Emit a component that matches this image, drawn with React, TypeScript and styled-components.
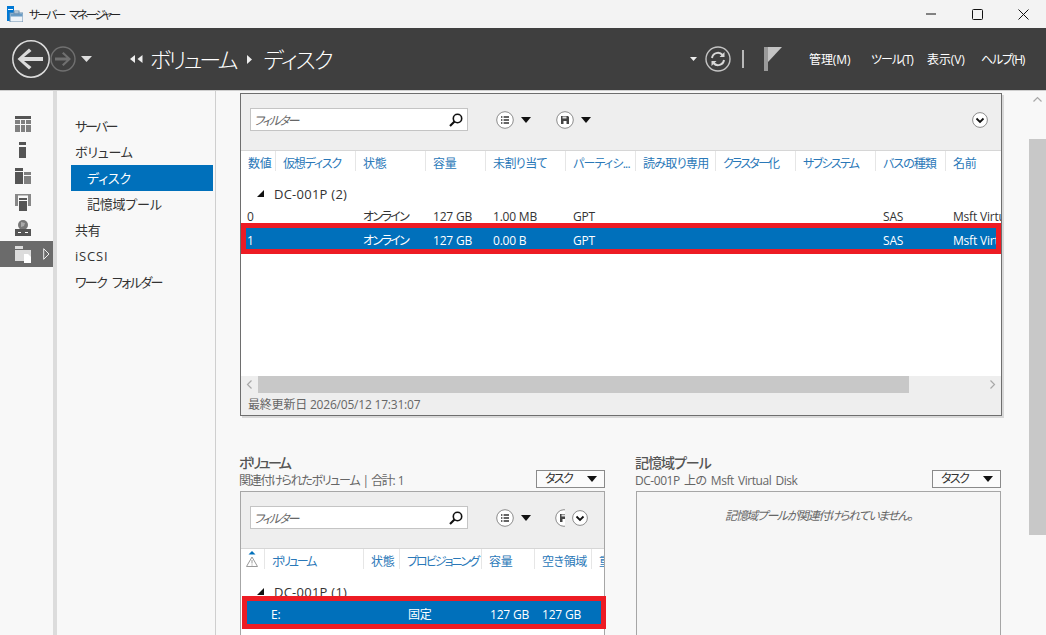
import React from 'react';
import styled, { createGlobalStyle } from 'styled-components';

const GlobalStyle = createGlobalStyle`
  html, body {
    margin: 0;
    padding: 0;
    height: 100%;
    overflow: hidden;
  }
  body {
    font-family: "Open Sans", "Noto Sans CJK JP", sans-serif;
    font-size: 12px;
    font-feature-settings: "palt";
    color: #333;
  }
`;

const AppContainer = styled.div`
  width: 1046px;
  height: 635px;
  display: flex;
  flex-direction: column;
  overflow: hidden;
  background: #f8f8f8;
`;

const Glyph = styled.svg`
  flex: none;
  display: block;
`;

const Gap = styled.span<{ $w: number }>`
  width: ${p => p.$w}px;
  flex: none;
`;

/* window chrome */
const TitleBar = styled.div`
  height: 28px;
  flex: none;
  display: flex;
  align-items: center;
  background: #f3f3f3;
  padding-left: 7px;
`;

const TitleText = styled.span`
  margin-left: 6px;
  font-size: 11.5px;
  letter-spacing: -2.4px;
  word-spacing: 5px;
  color: #222;
  flex: 1;
`;

const WinButton = styled.div`
  width: 46px;
  height: 28px;
  display: flex;
  align-items: center;
  justify-content: center;
`;

const Header = styled.header`
  height: 62px;
  flex: none;
  display: flex;
  align-items: center;
  background: #3f3f3f;
  padding-left: 11px;
`;

const BackGroup = styled.div`
  display: flex;
  align-items: center;
  width: 119px;
`;

const ForwardSlot = styled.div`
  margin-left: -1px;
`;

const Crumb = styled.span<{ $ml: number; $ls: number }>`
  font-size: 22px;
  font-weight: 300;
  letter-spacing: ${p => p.$ls}px;
  color: #fff;
  margin: 0 12px 0 ${p => p.$ml}px;
  line-height: 28px;
`;

const Spacer = styled.div`
  flex: 1;
`;

const HeaderTools = styled.div`
  display: flex;
  align-items: center;
  margin-right: 21px;
`;

const MenuItem = styled.span<{ $w: number; $ls: number }>`
  width: ${p => p.$w}px;
  font-size: 12px;
  letter-spacing: ${p => p.$ls}px;
  color: #fff;
  white-space: nowrap;
`;

const Body = styled.div`
  flex: 1;
  display: flex;
  min-height: 0;
  border-top: 1px solid #cfcfcf;
`;

/* left icon rail */
const Rail = styled.nav`
  width: 57px;
  box-sizing: border-box;
  flex: none;
  padding-top: 20px;
  border-right: 4px solid #dcdcdc;
  background: #f8f8f8;
`;

const RailItem = styled.div<{ $active?: boolean }>`
  height: 26px;
  position: relative;
  display: flex;
  align-items: center;
  padding-left: 15px;
  background: ${p => (p.$active ? '#6b6b6b' : 'transparent')};
`;

const RailArrow = styled.svg`
  position: absolute;
  right: 3px;
  top: 7px;
`;

/* tree nav */
const Nav = styled.nav`
  width: 159px;
  box-sizing: border-box;
  flex: none;
  padding: 22px 2px 0 14px;
  border-right: 1px solid #cfcfcf;
`;

const NavItem = styled.div<{ $sub?: boolean; $active?: boolean; $ls?: number }>`
  height: 26px;
  line-height: 27px;
  font-size: 13px;
  letter-spacing: ${p => p.$ls ?? -0.2}px;
  word-spacing: 4px;
  padding-left: ${p => (p.$sub ? 16 : 4)}px;
  background: ${p => (p.$active ? '#0070bb' : 'transparent')};
  color: ${p => (p.$active ? '#fff' : '#333')};
`;

/* content */
const Content = styled.main`
  flex: 1;
  min-width: 0;
  padding: 2px 0 0 24px;
  overflow: hidden;
`;

const Panel = styled.section`
  width: 762px;
  height: 323px;
  box-sizing: border-box;
  display: flex;
  flex-direction: column;
  border: 1px solid #6e6e6e;
  box-shadow: 2px 2px 0 #d8d8d8;
  background: #fff;
`;

const Toolbar = styled.div`
  height: 57px;
  flex: none;
  box-sizing: border-box;
  display: flex;
  align-items: flex-start;
  padding: 14px 13px 0 9px;
  background: #eeeeee;
  border-bottom: 1px solid #d6d6d6;
`;

const FilterBox = styled.div`
  width: 218px;
  height: 23px;
  flex: none;
  box-sizing: border-box;
  display: flex;
  align-items: center;
  justify-content: space-between;
  padding: 0 3px 0 3px;
  background: #fff;
  border: 1px solid #c4c4c4;
  font-size: 12px;
  font-style: italic;
  letter-spacing: -1.8px;
  color: #666;
`;

const ToolGroup = styled.div<{ $ml: number; $w?: number }>`
  display: flex;
  align-items: center;
  gap: 7px;
  height: 23px;
  margin-left: ${p => p.$ml}px;
  ${p => (p.$w ? `width: ${p.$w}px; overflow: hidden;` : '')}
`;

const MAIN_COLS = '35px 80px 70px 60px 80px 70px 80px 80px 80px 70px 55px';
const MAIN_SEL_COLS = '30px 80px 70px 60px 80px 70px 80px 80px 80px 70px 50px';
const VOL_COLS = '24px 99px 36px 82px 53px 57px 1fr';
const VOL_SEL_COLS = '17px 100px 36px 82px 53px 57px 1fr';

const HeadRow = styled.div<{ $cols: string }>`
  display: grid;
  grid-template-columns: ${p => p.$cols};
  height: 22px;
  flex: none;
  overflow: hidden;
`;

const HeadCell = styled.div<{ $ls?: number }>`
  box-sizing: border-box;
  padding: 0 0 0 7px;
  line-height: 26px;
  font-size: 12px;
  letter-spacing: ${p => p.$ls ?? -0.2}px;
  color: #2a78b8;
  white-space: nowrap;
  overflow: hidden;
  border-right: 1px solid #e6e6e6;
  margin-bottom: 2px;
  &:last-child {
    border-right: 0;
  }
`;

const SortCell = styled(HeadCell)`
  padding: 2px 0 0 4px;
`;

const GroupRow = styled.div<{ $h: number; $mb?: number }>`
  height: ${p => p.$h}px;
  margin-bottom: ${p => p.$mb ?? 0}px;
  flex: none;
  display: flex;
  align-items: flex-start;
  padding: 12px 0 0 16px;
  box-sizing: border-box;
  gap: 10px;
  font-size: 13px;
  letter-spacing: 0.25px;
  line-height: 18px;
  color: #333;
`;

const Triangle = styled.span`
  margin-top: 5px;
`;

const Row = styled.div<{ $cols: string; $selected?: boolean; $h?: number }>`
  display: grid;
  grid-template-columns: ${p => p.$cols};
  box-sizing: border-box;
  height: ${p => p.$h ?? (p.$selected ? 21 : 18)}px;
  padding-top: ${p => ((p.$h ?? (p.$selected ? 21 : 19)) + 5) / 2 - 9}px;
  line-height: 18px;
  flex: none;
  font-size: 12px;
  color: ${p => (p.$selected ? '#fff' : '#333')};
  background: ${p => (p.$selected ? '#0070bb' : 'transparent')};
  white-space: nowrap;
`;

const RowFrame = styled.div<{ $mr?: number; $ml?: number }>`
  flex: none;
  position: relative;
  margin-right: ${p => p.$mr ?? 0}px;
  margin-left: ${p => p.$ml ?? 0}px;
  border: 5px solid #ed1c24;
`;

const Cell = styled.div<{ $pl?: number }>`
  padding-left: ${p => p.$pl ?? 7}px;
  overflow-x: clip;
  letter-spacing: -0.2px;
`;

const Kana = styled.span`
  letter-spacing: -1.6px;
`;

const TableFill = styled.div`
  flex: 1;
`;

const HScroll = styled.div`
  height: 17px;
  flex: none;
  display: flex;
  align-items: stretch;
  background: #eeeeee;
`;

const ScrollEnd = styled.div`
  width: 17px;
  flex: none;
  display: flex;
  align-items: center;
  justify-content: center;
`;

const ScrollThumb = styled.div`
  width: 651px;
  flex: none;
  background: #c8c8c8;
`;

const ScrollRest = styled.div`
  flex: 1;
`;

const Footer = styled.div`
  height: 22px;
  flex: none;
  padding-left: 7px;
  line-height: 23px;
  font-size: 12px;
  letter-spacing: -0.2px;
  color: #666;
  background: #eeeeee;
`;

const Columns = styled.div`
  display: flex;
  margin-top: 38px;
  margin-left: -1px;
`;

const Section = styled.section<{ $ml?: number }>`
  width: 366px;
  margin-left: ${p => p.$ml ?? 0}px;
  flex: none;
`;

const SectionTitle = styled.h2<{ $ls: number }>`
  margin: 0;
  height: 16px;
  line-height: 17px;
  font-size: 14px;
  font-weight: 500;
  letter-spacing: ${p => p.$ls}px;
  color: #555;
`;

const SectionSub = styled.div<{ $ls: number }>`
  display: flex;
  justify-content: space-between;
  align-items: flex-start;
  height: 18px;
  margin-bottom: 3px;
  font-size: 12px;
  line-height: 22px;
  letter-spacing: ${p => p.$ls}px;
  word-spacing: 1.5px;
  color: #666;
`;

const TaskButton = styled.div`
  width: 69px;
  height: 18px;
  box-sizing: border-box;
  display: flex;
  align-items: center;
  justify-content: space-between;
  padding: 0 7px 0 8px;
  background: #fbfbfb;
  border: 1px solid #8a8a8a;
  font-size: 12px;
  letter-spacing: -1.6px;
  color: #333;
`;

const SubPanel = styled.div`
  margin-left: 1px;
  height: 160px;
  box-sizing: border-box;
  display: flex;
  flex-direction: column;
  border: 1px solid #a6a6a6;
  background: #fff;
`;

const EmptyPanel = styled.div`
  margin-left: 1px;
  height: 160px;
  box-sizing: border-box;
  border: 1px solid #a6a6a6;
  background: #f6f6f6;
  padding-top: 14px;
  text-align: center;
  font-size: 12px;
  font-style: italic;
  letter-spacing: -1.4px;
  color: #666;
`;

const VScroll = styled.div`
  width: 17px;
  flex: none;
  display: flex;
  flex-direction: column;
  background: #f8f8f8;
`;

const VScrollTop = styled.div`
  height: 48px;
  display: flex;
  justify-content: center;
  padding-top: 5px;
  box-sizing: border-box;
`;

const VScrollThumb = styled.div`
  height: 396px;
  background: #c8c8c8;
`;

/* drawings */
const AppIcon = () => (
  <Glyph width="16" height="16" viewBox="0 0 16 16">
    <rect x="0" y="0" width="7" height="15" fill="#0078d4" />
    <rect x="1" y="3" width="5" height="1" fill="#fff" />
    <rect x="3" y="7" width="13" height="9" fill="#eef3f8" stroke="#6a8fb0" />
    <rect x="3.5" y="7.5" width="12" height="3" fill="#6a9cc4" />
    <rect x="7" y="5" width="5" height="3" fill="none" stroke="#6a8fb0" />
  </Glyph>
);

const BackIcon = () => (
  <Glyph width="40" height="40" viewBox="0 0 40 40">
    <circle cx="20" cy="20" r="18.2" fill="none" stroke="#dcdcdc" strokeWidth="1.5" />
    <path d="M6.5 20 L18 9.5 L20.5 12 L13 18 H32 V22 H13 L20.5 28 L18 30.5 Z" fill="#dcdcdc" />
  </Glyph>
);

const ForwardIcon = () => (
  <Glyph width="26" height="26" viewBox="0 0 26 26">
    <circle cx="13" cy="13" r="12" fill="none" stroke="#707070" strokeWidth="1.4" />
    <path d="M21 13 L13.5 6 L12 7.5 L16.5 11.5 H5 V14.5 H16.5 L12 18.5 L13.5 20 Z" fill="#707070" />
  </Glyph>
);

const Tri = ({ w = 9, h = 5, fill = '#ddd', dir = 'down' }: { w?: number; h?: number; fill?: string; dir?: string }) => (
  <Glyph width={w} height={h} viewBox={`0 0 ${w} ${h}`}>
    {dir === 'down' && <path d={`M0 0 H${w} L${w / 2} ${h} Z`} fill={fill} />}
    {dir === 'right' && <path d={`M0 0 L${w} ${h / 2} L0 ${h} Z`} fill={fill} />}
  </Glyph>
);

const ExpandedTri = () => (
  <Glyph width="7" height="7" viewBox="0 0 7 7">
    <path d="M7 0 V7 H0 Z" fill="#111" />
  </Glyph>
);

const BackChevrons = () => (
  <Glyph width="13" height="8" viewBox="0 0 13 8">
    <path d="M5 0 L0 4 L5 8 Z M12.5 0 L7.5 4 L12.5 8 Z" fill="#eee" />
  </Glyph>
);

const RefreshIcon = () => (
  <Glyph width="26" height="26" viewBox="0 0 26 26">
    <circle cx="13" cy="13" r="12" fill="none" stroke="#c4c4c4" strokeWidth="1.4" />
    <path d="M7 12 a6 6 0 0 1 10.5 -3 M19 14 a6 6 0 0 1 -10.5 3" fill="none" stroke="#d8d8d8" strokeWidth="2" />
    <path d="M19.5 6 V11 H14.5 Z M6.5 20 V15 H11.5 Z" fill="#d8d8d8" />
  </Glyph>
);

const FlagIcon = () => (
  <Glyph width="18" height="24" viewBox="0 0 18 24">
    <rect x="0" y="0" width="4" height="24" fill="#9a9a9a" />
    <path d="M4 0 H18 L4 15 Z" fill="#c4c4c4" />
  </Glyph>
);

const GridIcon = () => (
  <Glyph width="16" height="16" viewBox="0 0 16 16">
    <rect x="0" y="0" width="16" height="3" fill="#555" />
    <path d="M0 4 H5 V8 H0 Z M6 4 H10 V8 H6 Z M11 4 H16 V8 H11 Z M0 9 H5 V16 H0 Z M6 9 H10 V16 H6 Z M11 9 H16 V16 H11 Z" fill="#808080" />
  </Glyph>
);

const ServerIcon = () => (
  <Glyph width="16" height="16" viewBox="0 0 16 16">
    <rect x="4" y="0" width="7" height="3" fill="#555" />
    <rect x="4" y="5" width="7" height="11" fill="#555" />
  </Glyph>
);

const RolesIcon = () => (
  <Glyph width="16" height="16" viewBox="0 0 16 16">
    <rect x="0" y="0" width="8" height="3" fill="#555" />
    <rect x="0" y="4" width="8" height="12" fill="#555" />
    <rect x="9" y="4" width="7" height="3" fill="#808080" />
    <rect x="9" y="8" width="7" height="8" fill="#808080" />
  </Glyph>
);

const GroupIcon = () => (
  <Glyph width="16" height="17" viewBox="0 0 16 17">
    <rect x="0" y="0" width="16" height="12" fill="#888" />
    <rect x="3" y="1.5" width="10" height="10.5" fill="#f8f8f8" />
    <rect x="4" y="4" width="8" height="2" fill="#555" />
    <rect x="4" y="7" width="8" height="10" fill="#555" />
  </Glyph>
);

const GlobeIcon = () => (
  <Glyph width="16" height="16" viewBox="0 0 16 16">
    <circle cx="8" cy="5" r="5" fill="#777" />
    <path d="M6 2 L10 3 L9 6 L6 7 Z" fill="#aaa" />
    <rect x="0" y="9" width="16" height="7" fill="#555" />
    <rect x="3" y="12" width="3" height="1" fill="#fff" />
    <rect x="10" y="12" width="3" height="1" fill="#fff" />
  </Glyph>
);

const FilesIcon = () => (
  <Glyph width="16" height="17" viewBox="0 0 16 17">
    <path d="M0 0 H8 V3 H0 Z M0 4 H16 V15 H0 Z" fill="#dcdcdc" />
    <path d="M9 8 H13 L16 11 V17 H9 Z" fill="#fff" />
  </Glyph>
);

const SearchIcon = () => (
  <Glyph width="16" height="16" viewBox="0 0 16 16">
    <circle cx="9.5" cy="6.5" r="4.2" fill="none" stroke="#111" strokeWidth="1.6" />
    <path d="M6.5 9.5 L2 14" stroke="#111" strokeWidth="2.2" />
  </Glyph>
);

const ListCircle = () => (
  <Glyph width="18" height="18" viewBox="0 0 18 18">
    <circle cx="9" cy="9" r="8.3" fill="#fff" stroke="#8c8c8c" />
    <path d="M5 6 H6.4 M5 9 H6.4 M5 12 H6.4 M7.6 6 H13 M7.6 9 H13 M7.6 12 H13" stroke="#333" strokeWidth="1.3" />
  </Glyph>
);

const SaveCircle = () => (
  <Glyph width="18" height="18" viewBox="0 0 18 18">
    <circle cx="9" cy="9" r="8.3" fill="#fff" stroke="#8c8c8c" />
    <path d="M5 5 H12 L13 6 V13 H5 Z" fill="#444" />
    <rect x="6.5" y="5.5" width="4" height="2" fill="#ddd" />
    <rect x="7.5" y="10" width="3" height="3" fill="#fff" />
  </Glyph>
);

const ChevronCircle = () => (
  <Glyph width="16" height="16" viewBox="0 0 16 16">
    <circle cx="8" cy="8" r="7.4" fill="#fff" stroke="#8c8c8c" />
    <path d="M4.5 6.5 L8 10 L11.5 6.5" fill="none" stroke="#111" strokeWidth="1.8" />
  </Glyph>
);

const ScrollChevron = ({ dir }: { dir: string }) => (
  <Glyph width="7" height="9" viewBox="0 0 7 9">
    <path d={dir === 'left' ? 'M5.5 0.5 L1.5 4.5 L5.5 8.5' : 'M1.5 0.5 L5.5 4.5 L1.5 8.5'} fill="none" stroke="#a8a8a8" strokeWidth="1.2" />
  </Glyph>
);

const SortIcon = () => (
  <Glyph width="14" height="18" viewBox="0 0 14 18">
    <path d="M3.5 3.5 L7 0 L10.5 3.5 Z" fill="#0070bb" />
    <path d="M7 6 L12.5 15.5 H1.5 Z" fill="none" stroke="#999" />
    <path d="M7 9 V12.5 M7 13.5 V14.5" stroke="#999" />
  </Glyph>
);

const mainHead: [string, number][] = [
  ['数値', -0.2],
  ['仮想ディスク', -1.2],
  ['状態', -0.2],
  ['容量', -0.2],
  ['未割り当て', -0.6],
  ['パーティシ...', -0.8],
  ['読み取り専用', -0.7],
  ['クラスター化', -1.8],
  ['サブシステム', -1.7],
  ['バスの種類', -1],
  ['名前', -0.2],
];

const volHead: [string, number][] = [
  ['ボリューム', -2.2],
  ['状態', -0.2],
  ['プロビジョニング', -2],
  ['容量', -0.2],
  ['空き領域', -0.4],
  ['重', 0],
];

const railIcons = [GridIcon, ServerIcon, RolesIcon, GroupIcon, GlobeIcon];

const DiskRow: React.FC<{ num: string; free: string; selected?: boolean }> = ({ num, free, selected }) => (
  <Row $cols={selected ? MAIN_SEL_COLS : MAIN_COLS} $selected={selected}>
    <Cell $pl={selected ? 1 : 6}>{num}</Cell>
    <Cell />
    <Cell><Kana>オンライン</Kana></Cell>
    <Cell>127 GB</Cell>
    <Cell>{free}</Cell>
    <Cell>GPT</Cell>
    <Cell />
    <Cell />
    <Cell />
    <Cell>SAS</Cell>
    <Cell>Msft Virtual Disk</Cell>
  </Row>
);

const App: React.FC = () => (
  <AppContainer>
    <GlobalStyle />
    <TitleBar>
      <AppIcon />
      <TitleText>サーバー マネージャー</TitleText>
      <WinButton>
        <Glyph width="10" height="10" viewBox="0 0 10 10"><path d="M0 5 H10" stroke="#111" /></Glyph>
      </WinButton>
      <WinButton>
        <Glyph width="11" height="11" viewBox="0 0 11 11"><rect x="0.5" y="0.5" width="10" height="10" rx="1" fill="none" stroke="#111" /></Glyph>
      </WinButton>
      <WinButton>
        <Glyph width="11" height="11" viewBox="0 0 11 11"><path d="M0.5 0.5 L10.5 10.5 M10.5 0.5 L0.5 10.5" stroke="#111" /></Glyph>
      </WinButton>
    </TitleBar>

    <Header>
      <BackGroup>
        <BackIcon />
        <ForwardSlot><ForwardIcon /></ForwardSlot>
        <Gap $w={5} />
        <Tri w={11} h={6} />
      </BackGroup>
      <BackChevrons />
      <Crumb $ml={7} $ls={-2.8}>ボリューム</Crumb>
      <Tri w={5} h={9} fill="#eee" dir="right" />
      <Crumb $ml={11} $ls={-1.8}>ディスク</Crumb>
      <Spacer />
      <HeaderTools>
        <Tri w={7} h={4} fill="#eee" />
        <Gap $w={8} />
        <RefreshIcon />
        <Gap $w={11} />
        <Glyph width="2" height="18" viewBox="0 0 2 18"><rect width="2" height="18" fill="#b8b8b8" /></Glyph>
        <Gap $w={20} />
        <FlagIcon />
        <Gap $w={27} />
        <MenuItem $w={62} $ls={-0.1}>管理(M)</MenuItem>
        <MenuItem $w={56} $ls={-1}>ツール(T)</MenuItem>
        <MenuItem $w={54} $ls={-0.1}>表示(V)</MenuItem>
        <MenuItem $w={44} $ls={-1.2}>ヘルプ(H)</MenuItem>
      </HeaderTools>
    </Header>

    <Body>
      <Rail>
        {railIcons.map((Icon, i) => (
          <RailItem key={i}><Icon /></RailItem>
        ))}
        <RailItem $active>
          <FilesIcon />
          <RailArrow width="7" height="12" viewBox="0 0 7 12">
            <path d="M0.7 0.7 L6 6 L0.7 11.3 Z" fill="none" stroke="#eee" />
          </RailArrow>
        </RailItem>
      </Rail>

      <Nav>
        <NavItem $ls={-2.2}>サーバー</NavItem>
        <NavItem>ボリューム</NavItem>
        <NavItem $sub $active>ディスク</NavItem>
        <NavItem $sub>記憶域プール</NavItem>
        <NavItem>共有</NavItem>
        <NavItem $ls={0.8}>iSCSI</NavItem>
        <NavItem $ls={-1.6}>ワーク フォルダー</NavItem>
      </Nav>

      <Content>
        <Panel>
          <Toolbar>
            <FilterBox>フィルター<SearchIcon /></FilterBox>
            <ToolGroup $ml={28}><ListCircle /><Tri w={10} h={6} fill="#111" /></ToolGroup>
            <ToolGroup $ml={25}><SaveCircle /><Tri w={10} h={6} fill="#111" /></ToolGroup>
            <Spacer />
            <ToolGroup $ml={0}><ChevronCircle /></ToolGroup>
          </Toolbar>
          <HeadRow $cols={MAIN_COLS}>
            {mainHead.map(([h, ls]) => <HeadCell key={h} $ls={ls}>{h}</HeadCell>)}
          </HeadRow>
          <GroupRow $h={30} $mb={2}><Triangle><ExpandedTri /></Triangle>DC-001P (2)</GroupRow>
          <DiskRow num="0" free="1.00 MB" />
          <RowFrame>
            <DiskRow num="1" free="0.00 B" selected />
          </RowFrame>
          <TableFill />
          <HScroll>
            <ScrollEnd><ScrollChevron dir="left" /></ScrollEnd>
            <ScrollThumb />
            <ScrollRest />
            <ScrollEnd><ScrollChevron dir="right" /></ScrollEnd>
          </HScroll>
          <Footer>最終更新日 2026/05/12 17:31:07</Footer>
        </Panel>

        <Columns>
          <Section>
            <SectionTitle $ls={-2.6}>ボリューム</SectionTitle>
            <SectionSub $ls={-1.3}>
              <span>関連付けられたボリューム | 合計: 1</span>
              <TaskButton>タスク<Tri w={10} h={6} fill="#111" /></TaskButton>
            </SectionSub>
            <SubPanel>
              <Toolbar>
                <FilterBox>フィルター<SearchIcon /></FilterBox>
                <ToolGroup $ml={28}><ListCircle /><Tri w={10} h={6} fill="#111" /></ToolGroup>
                <ToolGroup $ml={24} $w={10}><SaveCircle /></ToolGroup>
                <ToolGroup $ml={7}><ChevronCircle /></ToolGroup>
              </Toolbar>
              <HeadRow $cols={VOL_COLS}>
                <SortCell><SortIcon /></SortCell>
                {volHead.map(([h, ls]) => <HeadCell key={h} $ls={ls}>{h}</HeadCell>)}
              </HeadRow>
              <GroupRow $h={25}><Triangle><ExpandedTri /></Triangle>DC-001P (1)</GroupRow>
              <RowFrame $ml={1} $mr={-2}>
                <Row $cols={VOL_SEL_COLS} $selected $h={23}>
                  <Cell />
                  <Cell>E:</Cell>
                  <Cell />
                  <Cell $pl={8}>固定</Cell>
                  <Cell $pl={8}>127 GB</Cell>
                  <Cell>127 GB</Cell>
                  <Cell />
                </Row>
              </RowFrame>
            </SubPanel>
          </Section>
          <Section $ml={30}>
            <SectionTitle $ls={-1}>記憶域プール</SectionTitle>
            <SectionSub $ls={-0.45}>
              <span>DC-001P 上の Msft Virtual Disk</span>
              <TaskButton>タスク<Tri w={10} h={6} fill="#111" /></TaskButton>
            </SectionSub>
            <EmptyPanel>記憶域プールが関連付けられていません。</EmptyPanel>
          </Section>
        </Columns>
      </Content>

      <VScroll>
        <VScrollTop>
          <Glyph width="9" height="6" viewBox="0 0 9 6"><path d="M0.5 5.5 L4.5 1.5 L8.5 5.5" fill="none" stroke="#a8a8a8" strokeWidth="1.2" /></Glyph>
        </VScrollTop>
        <VScrollThumb />
      </VScroll>
    </Body>
  </AppContainer>
);

export default App;
